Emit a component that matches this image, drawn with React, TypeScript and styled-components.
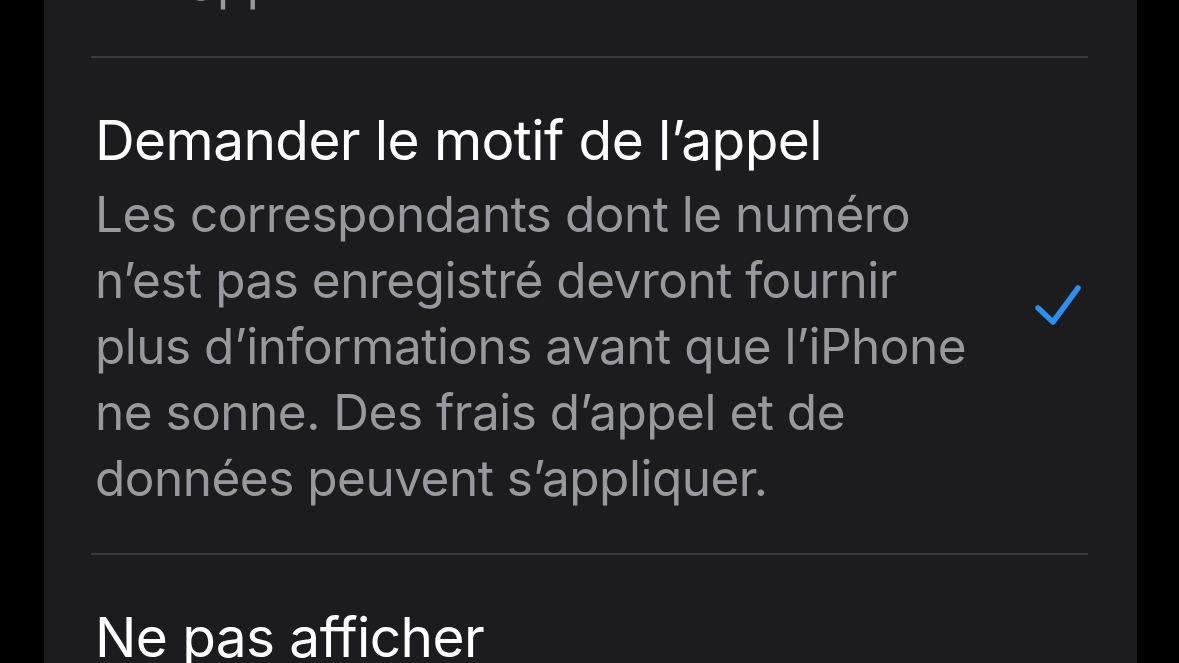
import React from "react";
import styled, { createGlobalStyle } from "styled-components";

const Global = createGlobalStyle`
  html, body { margin: 0; padding: 0; background: #000; }
  body { font-family: Inter, "Noto Sans", sans-serif; -webkit-font-smoothing: antialiased; }
`;

const Page = styled.div`
  width: 1179px;
  height: 663px;
  overflow: hidden;
  background: #000;
  padding-left: 44px;
  box-sizing: border-box;
`;

const Card = styled.div`
  width: 1093px;
  margin-top: -51px;
  background: #1c1c1e;
  padding: 0 49px 0 47px;
  box-sizing: border-box;
  display: flex;
  flex-direction: column;
`;

const Row = styled.div<{ $first?: boolean }>`
  display: flex;
  align-items: center;
  gap: 24px;
  padding: ${(p) => (p.$first ? "0 0 41px" : "50px 0 42px")};
  border-bottom: 2px solid #38383a;
  &:last-child { border-bottom: none; }
`;

const TextCol = styled.div`
  flex: 1;
  display: flex;
  flex-direction: column;
  gap: 9px;
  padding-left: 4px;
`;

const Title = styled.div`
  color: #ffffff;
  font-size: 55px;
  line-height: 64px;
  font-weight: 400;
  letter-spacing: -0.6px;
  white-space: nowrap;
`;

const Desc = styled.div`
  color: #98989f;
  font-size: 49.5px;
  line-height: 66px;
  font-weight: 400;
  letter-spacing: -0.5px;
  white-space: nowrap;
`;

const Check = styled.svg`
  width: 52px;
  height: 48px;
  flex: none;
  margin-right: 3px;
  margin-bottom: 8px;
`;

export default function App() {
  return (
    <>
      <Global />
      <Page>
        <Card>
          <Row $first>
            <TextCol>
              <Desc>vos appels récents.</Desc>
            </TextCol>
          </Row>
          <Row>
            <TextCol>
              <Title>Demander le motif de l’appel</Title>
              <Desc>
                Les correspondants dont le numéro
                <br />
                n’est pas enregistré devront fournir
                <br />
                plus d’informations avant que l’iPhone
                <br />
                ne sonne. Des frais d’appel et de
                <br />
                données peuvent s’appliquer.
              </Desc>
            </TextCol>
            <Check viewBox="0 0 52 48" fill="none">
              <polyline
                points="5,26 20,40 45,6"
                stroke="#2b8ef0"
                strokeWidth="5.5"
                strokeLinecap="round"
                strokeLinejoin="round"
              />
            </Check>
          </Row>
          <Row>
            <TextCol>
              <Title>Ne pas afficher</Title>
            </TextCol>
          </Row>
        </Card>
      </Page>
    </>
  );
}
